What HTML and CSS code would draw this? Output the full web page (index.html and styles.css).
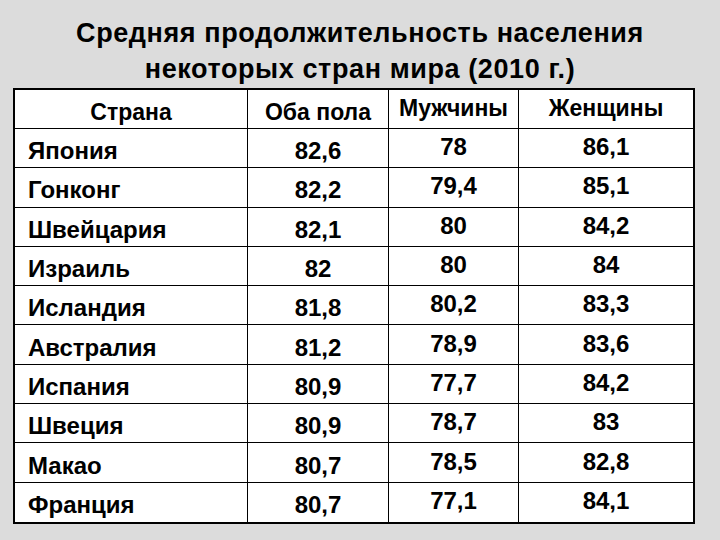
FILE: index.html
```html
<!DOCTYPE html>
<html lang="ru">
<head>
<meta charset="utf-8">
<title>Средняя продолжительность жизни</title>
<link rel="stylesheet" href="styles.css">
</head>
<body>
<main class="slide">
  <h1 class="title">Средняя продолжительность населения<br>некоторых стран мира (2010 г.)</h1>
  <table class="life">
    <thead>
      <tr>
        <th class="c-low">Страна</th>
        <th class="c-low">Оба пола</th>
        <th class="c-high">Мужчины</th>
        <th class="c-high">Женщины</th>
      </tr>
    </thead>
    <tbody>
      <tr><td class="name">Япония</td><td class="num c-low">82,6</td><td class="num c-high">78</td><td class="num c-high">86,1</td></tr>
      <tr><td class="name">Гонконг</td><td class="num c-low">82,2</td><td class="num c-high">79,4</td><td class="num c-high">85,1</td></tr>
      <tr><td class="name">Швейцария</td><td class="num c-low">82,1</td><td class="num c-high">80</td><td class="num c-high">84,2</td></tr>
      <tr><td class="name">Израиль</td><td class="num c-low">82</td><td class="num c-high">80</td><td class="num c-high">84</td></tr>
      <tr><td class="name">Исландия</td><td class="num c-low">81,8</td><td class="num c-high">80,2</td><td class="num c-high">83,3</td></tr>
      <tr><td class="name">Австралия</td><td class="num c-low">81,2</td><td class="num c-high">78,9</td><td class="num c-high">83,6</td></tr>
      <tr><td class="name">Испания</td><td class="num c-low">80,9</td><td class="num c-high">77,7</td><td class="num c-high">84,2</td></tr>
      <tr><td class="name">Швеция</td><td class="num c-low">80,9</td><td class="num c-high">78,7</td><td class="num c-high">83</td></tr>
      <tr><td class="name">Макао</td><td class="num c-low">80,7</td><td class="num c-high">78,5</td><td class="num c-high">82,8</td></tr>
      <tr><td class="name">Франция</td><td class="num c-low">80,7</td><td class="num c-high">77,1</td><td class="num c-high">84,1</td></tr>
    </tbody>
  </table>
</main>
</body>
</html>
```
FILE: styles.css
```css
html, body {
  margin: 0;
  padding: 0;
}
body {
  background: #dcdcdc;
  font-family: "Liberation Sans", Arial, sans-serif;
  color: #000;
}
.slide {
  width: 720px;
  height: 540px;
  padding-top: 15px;
  box-sizing: border-box;
}
.title {
  margin: 0 0 1px 0;
  font-size: 27px;
  line-height: 36px;
  font-weight: bold;
  letter-spacing: 0.6px;
  text-align: center;
}
.life {
  margin-left: 13px;
  width: 682px;
  box-sizing: border-box;
  border: 2px solid #000;
  border-collapse: separate;
  border-spacing: 0;
  background: #fff;
  table-layout: fixed;
}
.life th, .life td {
  border-right: 1px solid #000;
  border-bottom: 1px solid #000;
  padding: 0;
  vertical-align: middle;
  line-height: 26px;
  font-weight: bold;
}
.life th:last-child, .life td:last-child {
  border-right: none;
}
.life tbody tr:last-child td {
  border-bottom: none;
}
.life th:nth-child(1) { width: 232px; }
.life th:nth-child(2) { width: 140px; }
.life th:nth-child(3) { width: 129px; }
.life th:nth-child(4) { width: 174px; }
.life thead tr { height: 39px; }
.life tbody tr { height: 39.3px; }
.life th {
  font-size: 23px;
  letter-spacing: 0;
  text-align: center;
}
.life td {
  font-size: 24px;
  letter-spacing: 0;
}
.life td.name {
  text-align: left;
  padding-left: 13px;
  padding-top: 6px;
}
.life td.num {
  text-align: center;
}
.life .c-low {
  padding-top: 6px;
}
.life .c-high {
  padding-bottom: 2px;
}
```
